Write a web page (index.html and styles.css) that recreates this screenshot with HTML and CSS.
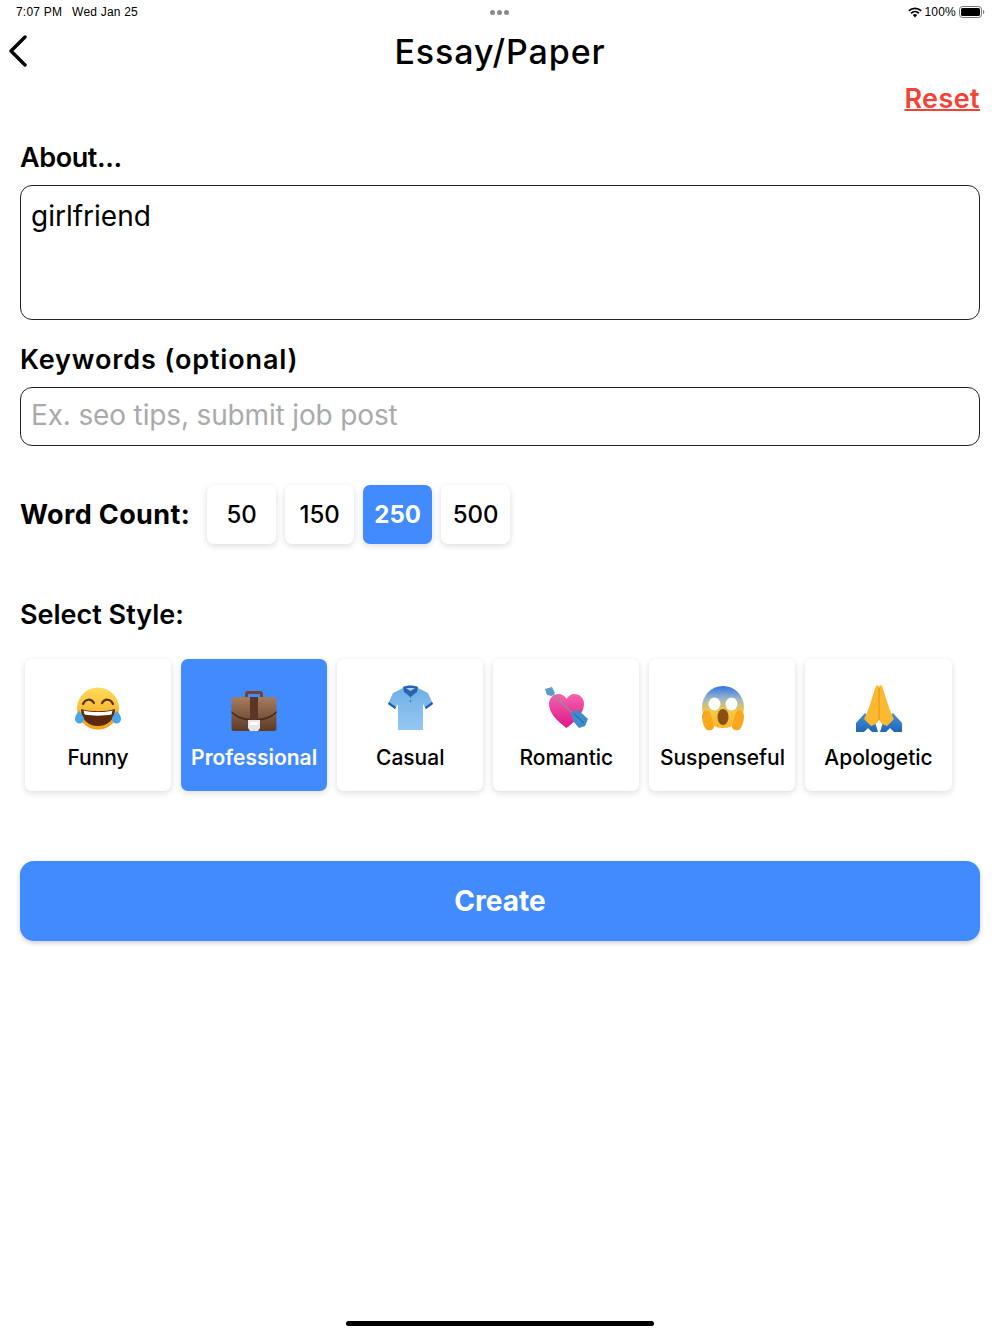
FILE: index.html
```html
<!DOCTYPE html>
<html lang="en">
<head>
    <meta charset="UTF-8">
    <title>Essay/Paper</title>
    <link rel="stylesheet" href="styles.css">
</head>
<body>
    <div class="status-bar">
        <div class="status-left"><span>7:07 PM</span><span>Wed Jan 25</span></div>
        <div class="status-dots"><i></i><i></i><i></i></div>
        <div class="status-right">
            <svg width="14" height="11" viewBox="0 0 14 11"><path d="M7 10.500 4.800 8a3.200 3.200 0 0 1 4.400 0zM3.700 6.900 2.500 5.600a6.500 6.500 0 0 1 9 0l-1.200 1.300a4.800 4.800 0 0 0-6.600 0zM1.400 4.500.2 3.200a9.900 9.900 0 0 1 13.600 0l-1.200 1.300a8.200 8.200 0 0 0-11.200 0z" fill="#000"/></svg>
            <span>100%</span>
            <svg width="26" height="12" viewBox="0 0 26 12"><rect x=".5" y=".5" width="22" height="11" rx="3" fill="none" stroke="#777"/><rect x="2" y="2" width="19" height="8" rx="1.500" fill="#000"/><path d="M24 4v4c.8-.3 1.300-1 1.300-2s-.5-1.700-1.300-2z" fill="#777"/></svg>
        </div>
    </div>

    <header class="top-bar">
        <svg class="back" width="20" height="32" viewBox="0 0 20 32"><path d="M17 2 3 16l14 14" fill="none" stroke="#000" stroke-width="3.400" stroke-linecap="round" stroke-linejoin="round"/></svg>
        <h1>Essay/Paper</h1>
    </header>

    <main class="content">
        <div class="reset-row"><a href="#" class="reset">Reset</a></div>

        <h2 class="label about-label">About...</h2>
        <div class="field about">girlfriend</div>

        <h2 class="label keywords-label">Keywords (optional)</h2>
        <div class="field keywords">Ex. seo tips, submit job post</div>

        <div class="word-count">
            <h2 class="label">Word Count:</h2>
            <div class="count-btn">50</div>
            <div class="count-btn">150</div>
            <div class="count-btn active">250</div>
            <div class="count-btn">500</div>
        </div>

        <h2 class="label style-label">Select Style:</h2>
        <div class="styles">
            <div class="style-card">
                <svg class="emoji" viewBox="0 0 48 48">
                    <defs><linearGradient id="face" x1="0" y1="0" x2="0" y2="1"><stop offset="0" stop-color="#ffdc5a"/><stop offset="1" stop-color="#f3a01c"/></linearGradient></defs>
                    <circle cx="24" cy="24.500" r="21" fill="url(#face)"/>
                    <path d="M9 20c2-5 8-6 11-1M28 19c3-5 9-4 11 1" fill="none" stroke="#5b3410" stroke-width="2.200" stroke-linecap="round"/>
                    <path d="M7 25c10 3 24 3 34 0 0 11-8 17-17 17S7 36 7 25z" fill="#5b2a0c"/>
                    <path d="M9.500 26.500c9 2 20 2 29 0l-1 4c-8 1.500-19 1.500-27 0z" fill="#fff"/>
                    <path d="M5 27c2 3 5 5 5 8a4.500 4.500 0 0 1-9 0c0-3 2-6 4-8zM43 27c-2 3-5 5-5 8a4.500 4.500 0 0 0 9 0c0-3-2-6-4-8z" fill="#4aa6ea"/>
                </svg>
                <span>Funny</span>
            </div>
            <div class="style-card active">
                <svg class="emoji" viewBox="0 0 48 48">
                    <defs><linearGradient id="leather" x1="0" y1="0" x2="0" y2="1"><stop offset="0" stop-color="#a67c5f"/><stop offset="1" stop-color="#5d3a26"/></linearGradient></defs>
                    <path d="M15 14v-4c0-2 1-3 3-3h12c2 0 3 1 3 3v4h-3v-4H18v4z" fill="#6b4630"/>
                    <rect x="1.500" y="13" width="45" height="34" rx="2" fill="url(#leather)"/>
                    <path d="M1.500 27c6 6 14 8 22.500 8s16.500-2 22.500-8v2c-6 6-14 8-22.500 8S7.500 35 1.500 29z" fill="#4a2d1c"/>
                    <rect x="20" y="13" width="8" height="24" fill="#5a3624"/>
                    <path d="M18 36h12v8l-2 3h-8l-2-3z" fill="#e6e6e6"/>
                    <rect x="20" y="38" width="8" height="3" fill="#fff"/>
                </svg>
                <span>Professional</span>
            </div>
            <div class="style-card">
                <svg class="emoji" viewBox="0 0 48 48">
                    <defs><linearGradient id="polo" x1="0" y1="0" x2="0" y2="1"><stop offset="0" stop-color="#6fb0e6"/><stop offset="1" stop-color="#95c8f2"/></linearGradient></defs>
                    <path d="M17 4 7 9 2 20l7 5 3-5v26h25V20l3 5 7-5-5-11-10-5-7 4z" fill="url(#polo)"/>
                    <path d="M2 20l7 5 1-2-7-5zM47 20l-7 5-1-2 7-5z" fill="#1f5fa8"/>
                    <path d="M17 3c4-2 11-2 15 0l-1 5-6.500 5-6.500-5z" fill="#2763ae"/>
                    <path d="M20 4h9l-4.500 3z" fill="#a9d2f4"/>
                    <circle cx="24.500" cy="13" r=".8" fill="#2763ae"/><circle cx="24.500" cy="17" r=".8" fill="#2763ae"/>
                </svg>
                <span>Casual</span>
            </div>
            <div class="style-card">
                <svg class="emoji" viewBox="0 0 48 48">
                    <defs><linearGradient id="heart" x1="0" y1="0" x2="0" y2="1"><stop offset="0" stop-color="#f563ad"/><stop offset="1" stop-color="#e0148a"/></linearGradient></defs>
                    <path d="M24.500 44C15 37 7 29 7 20c0-6 4.500-10 9.500-10 3.500 0 6.500 2 8 5 1.500-3 4.500-5 8-5 5 0 9.500 4 9.500 10 0 9-8 17-17.500 24z" fill="url(#heart)"/>
                    <path d="M11 10 31 30" stroke="#8a8f99" stroke-width="1.500"/>
                    <path d="M3 5 10 3l3 6-3 3-5-1z" fill="#5e9bc9"/>
                    <path d="M29 28l7-2 10 9-3 7-6 2-6-7z" fill="#3f8ccc"/>
                    <path d="M32 30l10 9" stroke="#1f5f98" stroke-width="1"/>
                </svg>
                <span>Romantic</span>
            </div>
            <div class="style-card">
                <svg class="emoji" viewBox="0 0 48 48">
                    <defs><linearGradient id="scared" x1="0" y1="0" x2="0" y2="1"><stop offset="0" stop-color="#2f74ec"/><stop offset=".3" stop-color="#9db4c4"/><stop offset=".6" stop-color="#f3c84a"/><stop offset="1" stop-color="#f8b628"/></linearGradient></defs>
                    <circle cx="25" cy="23" r="21" fill="url(#scared)"/>
                    <ellipse cx="16.500" cy="20" rx="6" ry="6.500" fill="#fff"/>
                    <ellipse cx="33.500" cy="20" rx="6" ry="6.500" fill="#fff"/>
                    <ellipse cx="25" cy="33" rx="5.500" ry="8" fill="#8a4f12"/>
                    <path d="M6 27c3-2 6 0 7 4l3 11c0 4-4 5-7 4-3-2-5-9-5-14 0-2 1-4 2-5zM44 27c-3-2-6 0-7 4l-3 11c0 4 4 5 7 4 3-2 5-9 5-14 0-2-1-4-2-5z" fill="#f7a81c"/>
                </svg>
                <span>Suspenseful</span>
            </div>
            <div class="style-card">
                <svg class="emoji" viewBox="0 0 48 48">
                    <defs><linearGradient id="sleeve" x1="0" y1="0" x2="0" y2="1"><stop offset="0" stop-color="#4a90d9"/><stop offset="1" stop-color="#1f66b8"/></linearGradient></defs>
                    <path d="M1 48v-9l9-10 10 9 3 10h-6l-4-4-4 4zM47 48v-9l-9-10-10 9-3 10h6l4-4 4 4z" fill="url(#sleeve)"/>
                    <path d="M21 2c2-2 3 0 3 2v32l-3 4-5 2-7-7c5-9 8-22 12-33zM27 2c-2-2-3 0-3 2v32l3 4 5 2 7-7c-5-9-8-22-12-33z" fill="#fbb92f"/>
                    <path d="M24 4v32" stroke="#e2931c" stroke-width="1"/>
                </svg>
                <span>Apologetic</span>
            </div>
        </div>

        <button type="button" class="create">Create</button>
    </main>

    <div class="home-bar"></div>
</body>
</html>
```

FILE: styles.css
```css
* {
    box-sizing: border-box;
}
html, body {
    margin: 0;
    padding: 0;
}
body {
    width: 1000px;
    height: 1334px;
    position: relative;
    overflow: hidden;
    background-color: #fff;
    color: #000;
    font-family: Inter, "Open Sans", sans-serif;
}
.status-bar {
    height: 24px;
    padding: 0 15px 0 16px;
    display: flex;
    justify-content: space-between;
    align-items: center;
    font-family: "Liberation Sans", Arial, sans-serif;
    font-size: 12px;
    letter-spacing: 0.2px;
    position: relative;
}
.status-left {
    display: flex;
    gap: 10px;
}
.status-right {
    display: flex;
    align-items: center;
    gap: 3px;
}
.status-dots {
    position: absolute;
    left: 490px;
    top: 10px;
    display: flex;
    gap: 2px;
}
.status-dots i {
    width: 5px;
    height: 5px;
    border-radius: 50%;
    background-color: #8a8a8e;
}
.top-bar {
    height: 54px;
    position: relative;
    display: flex;
    justify-content: center;
    align-items: center;
}
.top-bar h1 {
    margin: 0;
    font-size: 34px;
    font-weight: 500;
    letter-spacing: 0.9px;
}
.back {
    position: absolute;
    left: 8px;
    top: 11px;
}
.content {
    padding: 0 20px;
}
.reset-row {
    display: flex;
    justify-content: flex-end;
    height: 60px;
    padding-top: 4px;
}
.reset {
    align-self: flex-start;
    color: #f44336;
    font-size: 27px;
    font-weight: 600;
    letter-spacing: 0.4px;
    text-decoration-thickness: 2px;
}
.label {
    margin: 0;
    font-size: 27px;
    font-weight: 600;
    line-height: 40px;
}
.about-label {
    letter-spacing: -0.4px;
}
.field {
    border: 1px solid #222;
    border-radius: 12px;
    padding: 0 10px;
    font-size: 28px;
}
.about {
    margin-top: 7px;
    height: 135px;
    padding-top: 13px;
}
.keywords-label {
    margin-top: 20px;
    letter-spacing: 0.85px;
}
.keywords {
    margin-top: 7px;
    height: 59px;
    line-height: 55px;
    letter-spacing: -0.15px;
    color: #aaa;
}
.word-count {
    margin-top: 39px;
    display: flex;
    align-items: center;
    gap: 9px;
}
.word-count .label {
    margin-right: 8px;
    letter-spacing: 0.37px;
    font-weight: 700;
}
.count-btn {
    width: 69px;
    height: 59px;
    display: flex;
    justify-content: center;
    align-items: center;
    background: #fff;
    border-radius: 7px;
    font-size: 24px;
    font-weight: 500;
    box-shadow: 0 2px 6px rgba(0, 0, 0, 0.14);
}
.count-btn.active {
    background-color: #428bff;
    color: #fff;
    font-weight: 700;
}
.style-label {
    margin-top: 51px;
}
.styles {
    margin-top: 24px;
    padding-left: 5px;
    display: flex;
    gap: 10px;
}
.style-card {
    width: 146.1px;
    height: 132px;
    display: flex;
    flex-direction: column;
    align-items: center;
    background: #fff;
    border-radius: 7px;
    font-size: 21px;
    font-weight: 500;
    line-height: 26px;
    box-shadow: 0 2px 6px rgba(0, 0, 0, 0.14);
}
.style-card.active {
    background-color: #428bff;
    color: #fff;
    font-weight: 600;
}
.emoji {
    display: block;
    width: 48px;
    height: 48px;
    margin-top: 25px;
    margin-bottom: 13px;
}
.create {
    display: block;
    width: 100%;
    height: 80px;
    margin-top: 70px;
    border: none;
    border-radius: 14px;
    background-color: #428bff;
    color: #fff;
    font-family: inherit;
    font-size: 28px;
    font-weight: 700;
    box-shadow: 0 2px 5px rgba(0, 0, 0, 0.2);
}
.home-bar {
    position: absolute;
    left: 346px;
    bottom: 8px;
    width: 308px;
    height: 5px;
    border-radius: 3px;
    background-color: #000;
}
```
